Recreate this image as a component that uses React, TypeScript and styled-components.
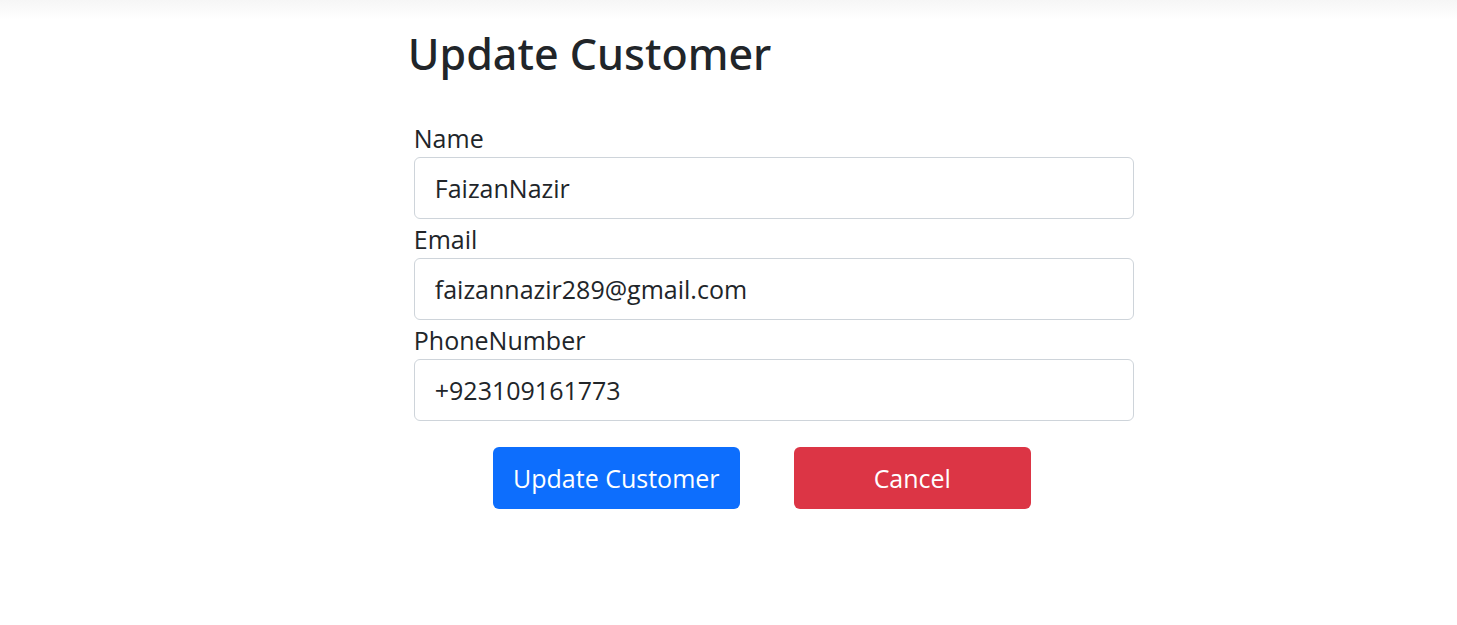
import React, { useState } from "react";
import styled, { createGlobalStyle } from "styled-components";

const GlobalStyle = createGlobalStyle`
  *, *::before, *::after { box-sizing: border-box; }
  body {
    margin: 0;
    background: #ffffff;
    color: #212529;
    font-family: "Segoe UI", "Open Sans", "Noto Sans", sans-serif;
    font-size: 25px;
    line-height: 36px;
  }
`;

const Page = styled.main`
  padding-top: 28px;
  background: linear-gradient(#f6f6f6, #ffffff) no-repeat top / 100% 20px;
`;

const Form = styled.form`
  width: 50%;
  max-width: 720px;
  margin-left: 28.4%;
`;

const Title = styled.h1`
  margin: 0 0 42px -6px;
  font-family: "Segoe UI", "Noto Sans", "Open Sans", sans-serif;
  font-size: 43px;
  font-weight: 500;
  line-height: 52px;
`;

const Field = styled.div`
  display: flex;
  flex-direction: column;
  gap: 2px;
  margin-bottom: 4px;
`;

const Label = styled.label`
  line-height: 33px;
`;

const Input = styled.input`
  width: 100%;
  height: 62px;
  padding: 0 20px;
  border: 1px solid #ced4da;
  border-radius: 6px;
  background: #ffffff;
  color: inherit;
  font: inherit;
`;

const Actions = styled.div`
  display: flex;
  gap: 54px;
  padding: 22px 0 0 79px;
`;

const Button = styled.button<{ $variant: "primary" | "danger" }>`
  width: ${({ $variant }) => ($variant === "primary" ? 247 : 237)}px;
  height: 62px;
  padding: 0;
  border: 0;
  border-radius: 6px;
  background: ${({ $variant }) => ($variant === "primary" ? "#0d6efd" : "#dc3545")};
  color: #ffffff;
  font: inherit;
  cursor: pointer;
`;

const fields = [
  { id: "name", label: "Name", type: "text", value: "FaizanNazir" },
  { id: "email", label: "Email", type: "email", value: "faizannazir289@gmail.com" },
  { id: "phone", label: "PhoneNumber", type: "tel", value: "+923109161773" },
];

export default function App() {
  const [values, setValues] = useState<Record<string, string>>(
    Object.fromEntries(fields.map((f) => [f.id, f.value]))
  );
  return (
    <>
      <GlobalStyle />
      <Page>
        <Form onSubmit={(e) => e.preventDefault()}>
          <Title>Update Customer</Title>
          {fields.map((f) => (
            <Field key={f.id}>
              <Label htmlFor={f.id}>{f.label}</Label>
              <Input
                id={f.id}
                type={f.type}
                value={values[f.id]}
                onChange={(e) => setValues({ ...values, [f.id]: e.target.value })}
              />
            </Field>
          ))}
          <Actions>
            <Button type="submit" $variant="primary">Update Customer</Button>
            <Button type="button" $variant="danger">Cancel</Button>
          </Actions>
        </Form>
      </Page>
    </>
  );
}
